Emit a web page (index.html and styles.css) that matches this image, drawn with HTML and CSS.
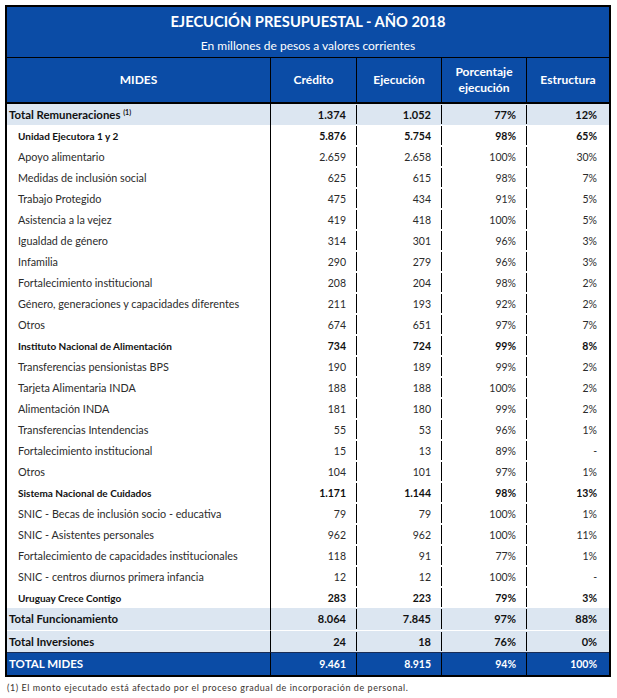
FILE: index.html
```html
<!DOCTYPE html>
<html lang="es">
<head>
<meta charset="utf-8">
<title>Ejecución presupuestal MIDES 2018</title>
<link rel="stylesheet" href="styles.css">
</head>
<body>
<div class="page">
<table class="budget">
  <colgroup>
    <col class="w-name"><col class="w-num"><col class="w-num2"><col class="w-num2"><col class="w-last">
  </colgroup>
  <thead>
    <tr class="title-row"><th colspan="5" class="title">EJECUCIÓN PRESUPUESTAL - AÑO 2018</th></tr>
    <tr class="sub-row"><th colspan="5" class="subtitle">En millones de pesos a valores corrientes</th></tr>
    <tr class="head-row">
      <th class="h">MIDES</th>
      <th class="h">Crédito</th>
      <th class="h">Ejecución</th>
      <th class="h">Porcentaje<br>ejecución</th>
      <th class="h last">Estructura</th>
    </tr>
  </thead>
  <tbody>
    <tr class="total"><td class="name">Total Remuneraciones <sup>(1)</sup></td><td class="n">1.374</td><td class="n">1.052</td><td class="n">77%</td><td class="n last">12%</td></tr>
    <tr class="group"><td class="name">Unidad Ejecutora 1 y 2</td><td class="n">5.876</td><td class="n">5.754</td><td class="n">98%</td><td class="n last">65%</td></tr>
    <tr class="item"><td class="name">Apoyo alimentario</td><td class="n">2.659</td><td class="n">2.658</td><td class="n">100%</td><td class="n last">30%</td></tr>
    <tr class="item"><td class="name">Medidas de inclusión social</td><td class="n">625</td><td class="n">615</td><td class="n">98%</td><td class="n last">7%</td></tr>
    <tr class="item"><td class="name">Trabajo Protegido</td><td class="n">475</td><td class="n">434</td><td class="n">91%</td><td class="n last">5%</td></tr>
    <tr class="item"><td class="name">Asistencia a la vejez</td><td class="n">419</td><td class="n">418</td><td class="n">100%</td><td class="n last">5%</td></tr>
    <tr class="item"><td class="name">Igualdad de género</td><td class="n">314</td><td class="n">301</td><td class="n">96%</td><td class="n last">3%</td></tr>
    <tr class="item"><td class="name">Infamilia</td><td class="n">290</td><td class="n">279</td><td class="n">96%</td><td class="n last">3%</td></tr>
    <tr class="item"><td class="name">Fortalecimiento institucional</td><td class="n">208</td><td class="n">204</td><td class="n">98%</td><td class="n last">2%</td></tr>
    <tr class="item"><td class="name">Género, generaciones y capacidades diferentes</td><td class="n">211</td><td class="n">193</td><td class="n">92%</td><td class="n last">2%</td></tr>
    <tr class="item"><td class="name">Otros</td><td class="n">674</td><td class="n">651</td><td class="n">97%</td><td class="n last">7%</td></tr>
    <tr class="group"><td class="name">Instituto Nacional de Alimentación</td><td class="n">734</td><td class="n">724</td><td class="n">99%</td><td class="n last">8%</td></tr>
    <tr class="item"><td class="name">Transferencias pensionistas BPS</td><td class="n">190</td><td class="n">189</td><td class="n">99%</td><td class="n last">2%</td></tr>
    <tr class="item"><td class="name">Tarjeta Alimentaria INDA</td><td class="n">188</td><td class="n">188</td><td class="n">100%</td><td class="n last">2%</td></tr>
    <tr class="item"><td class="name">Alimentación INDA</td><td class="n">181</td><td class="n">180</td><td class="n">99%</td><td class="n last">2%</td></tr>
    <tr class="item"><td class="name">Transferencias Intendencias</td><td class="n">55</td><td class="n">53</td><td class="n">96%</td><td class="n last">1%</td></tr>
    <tr class="item"><td class="name">Fortalecimiento institucional</td><td class="n">15</td><td class="n">13</td><td class="n">89%</td><td class="n last">-</td></tr>
    <tr class="item"><td class="name">Otros</td><td class="n">104</td><td class="n">101</td><td class="n">97%</td><td class="n last">1%</td></tr>
    <tr class="group"><td class="name">Sistema Nacional de Cuidados</td><td class="n">1.171</td><td class="n">1.144</td><td class="n">98%</td><td class="n last">13%</td></tr>
    <tr class="item"><td class="name">SNIC - Becas de inclusión socio - educativa</td><td class="n">79</td><td class="n">79</td><td class="n">100%</td><td class="n last">1%</td></tr>
    <tr class="item"><td class="name">SNIC - Asistentes personales</td><td class="n">962</td><td class="n">962</td><td class="n">100%</td><td class="n last">11%</td></tr>
    <tr class="item"><td class="name">Fortalecimiento de capacidades institucionales</td><td class="n">118</td><td class="n">91</td><td class="n">77%</td><td class="n last">1%</td></tr>
    <tr class="item"><td class="name">SNIC - centros diurnos primera infancia</td><td class="n">12</td><td class="n">12</td><td class="n">100%</td><td class="n last">-</td></tr>
    <tr class="group"><td class="name">Uruguay Crece Contigo</td><td class="n">283</td><td class="n">223</td><td class="n">79%</td><td class="n last">3%</td></tr>
    <tr class="total tall"><td class="name">Total Funcionamiento</td><td class="n">8.064</td><td class="n">7.845</td><td class="n">97%</td><td class="n last">88%</td></tr>
    <tr class="total sep"><td class="name">Total Inversiones</td><td class="n">24</td><td class="n">18</td><td class="n">76%</td><td class="n last">0%</td></tr>
    <tr class="grand"><td class="name">TOTAL MIDES</td><td class="n">9.461</td><td class="n">8.915</td><td class="n">94%</td><td class="n last">100%</td></tr>
  </tbody>
</table>
<p class="note">(1) El monto ejecutado está afectado por el proceso gradual de incorporación de personal.</p>
</div>
</body>
</html>
```

FILE: styles.css
```css
html, body {
  margin: 0;
  padding: 0;
  background: #ffffff;
}

.page {
  padding: 5px 0 0 5px;
  font-family: Lato, "Open Sans", sans-serif;
}

.budget {
  width: 606px;
  table-layout: fixed;
  border-collapse: separate;
  border-spacing: 0;
  border: 2px solid #000;
}

.w-name { width: 264px; }
.w-num { width: 86px; }
.w-num2 { width: 85px; }
.w-last { width: 82px; }

.budget th,
.budget td {
  padding: 0;
  white-space: nowrap;
  overflow: hidden;
}

.title-row th,
.sub-row th,
.head-row th {
  background: #0b4ca6;
  color: #ffffff;
}

.title {
  height: 27px;
  font-size: 14.7px;
  font-weight: 700;
  text-align: center;
  vertical-align: middle;
  line-height: 18px;
}

.subtitle {
  height: 23px;
  padding-bottom: 1px;
  font-size: 12px;
  font-weight: 400;
  text-align: center;
  vertical-align: middle;
  line-height: 16px;
  border-bottom: 1px solid #000;
}

.budget .head-row th {
  height: 44px;
  font-size: 12px;
  font-weight: 700;
  line-height: 16px;
  text-align: center;
  vertical-align: middle;
  border-right: 1px solid #000;
  border-bottom: 2px solid #000;
}

.budget .head-row th.last {
  border-right: 0;
}

/* Body rows */
.budget tbody td {
  height: 21px;
  font-size: 10.8px;
  line-height: 14px;
  color: #2b2b2b;
  vertical-align: middle;
}

.budget tbody td.n {
  font-size: 10.5px;
  text-align: right;
  padding-right: 11px;
  background-image: linear-gradient(#000, #000);
  background-repeat: no-repeat;
  background-position: right 0 top 1px;
  background-size: 1px calc(100% - 2px);
}

.budget tbody td.n.last {
  background-image: none;
  padding-right: 12px;
}

.budget td.name {
  border-right: 1px solid #000;
  padding-left: 11px;
  text-align: left;
}

.budget .group td {
  font-weight: 700;
  color: #111111;
}

.budget .group td.name {
  font-size: 10px;
}

.budget .total td {
  background-color: #dce6f1;
  font-weight: 700;
  color: #111111;
}

.budget .total td.n {
  font-size: 11px;
}

.budget .total td.name {
  padding-left: 2px;
  font-size: 11.4px;
}

.budget .tall td {
  height: 22px;
}

.budget .sep td {
  border-top: 1px solid #ffffff;
  height: 21px;
}

.total sup {
  font-size: 7px;
  vertical-align: 4px;
  line-height: 0;
}

.budget .grand td {
  background-color: #0b4ca6;
  color: #ffffff;
  font-weight: 700;
  font-size: 11.5px;
  border-top: 1px solid #1a2d55;
  height: 22px;
}

.budget .grand td.name {
  padding-left: 2px;
  font-size: 11.5px;
}

.budget .grand td.n {
  background-image: linear-gradient(#000, #000);
  background-size: 1px 100%;
  background-position: right 0 top 0;
}

.budget .grand td.n.last {
  background-image: none;
}

.note {
  margin: 5px 0 0 2px;
  font-size: 9px;
  letter-spacing: 0.55px;
  color: #3b3430;
}
```
